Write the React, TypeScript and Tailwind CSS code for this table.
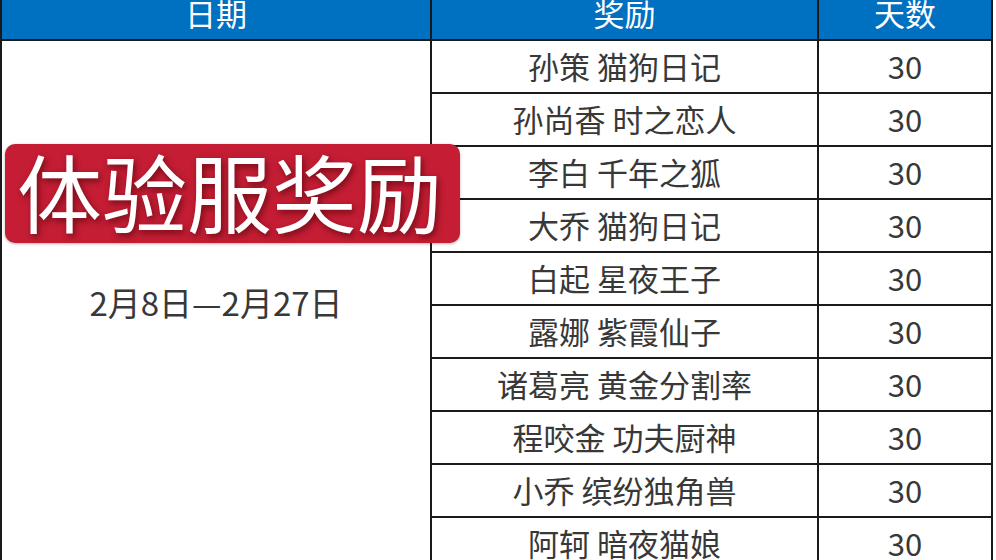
import React from "react";

const rows = [
  "孙策 猫狗日记",
  "孙尚香 时之恋人",
  "李白 千年之狐",
  "大乔 猫狗日记",
  "白起 星夜王子",
  "露娜 紫霞仙子",
  "诸葛亮 黄金分割率",
  "程咬金 功夫厨神",
  "小乔 缤纷独角兽",
  "阿轲 暗夜猫娘",
];

const font = { fontFamily: '"Noto Sans CJK SC", "Noto Sans", sans-serif' };

export default function App() {
  return (
    <div
      className="relative w-[996px] h-[560px] overflow-hidden bg-white"
      style={font}
    >
      <div className="w-[993px] border-l-2 border-r-2 border-[#1a1a1a]">
        {/* header */}
        <div className="flex h-[41px] bg-[#0070c0] border-b-2 border-[#1a1a1a] text-white text-[31px]">
          <div className="w-[430px] border-r-2 border-[#1a1a1a] flex justify-center">
            <span className="block leading-[30px] -mt-[2px]">日期</span>
          </div>
          <div className="w-[387px] border-r-2 border-[#1a1a1a] flex justify-center">
            <span className="block leading-[30px] -mt-[2px]">奖励</span>
          </div>
          <div className="flex-1 flex justify-center">
            <span className="block leading-[30px] -mt-[2px]">天数</span>
          </div>
        </div>
        {/* body */}
        <div className="flex">
          <div className="w-[430px] h-[530px] border-r-2 border-[#1a1a1a] flex items-center justify-center pb-[8px]">
            <span className="text-[33px] text-[#383838] leading-none">
              2月8日—2月27日
            </span>
          </div>
          <div className="flex flex-col">
            {rows.map((r) => (
              <div key={r} className="flex h-[53px] border-b-2 border-[#1a1a1a]">
                <div className="w-[387px] border-r-2 border-[#1a1a1a] flex items-center justify-center text-[31px] text-[#383838] leading-none pb-[2px]">
                  {r}
                </div>
                <div className="w-[172px] flex items-center justify-center text-[31px] text-[#383838] leading-none pb-[2px]">
                  30
                </div>
              </div>
            ))}
          </div>
        </div>
      </div>

      {/* badge overlay */}
      <div className="absolute left-[5px] top-[144px] w-[455px] h-[99px] rounded-[10px] bg-[#c41d34] shadow-[0_1px_3px_rgba(0,0,0,0.3)] flex items-center pl-[12px] pb-[9px]">
        <span className="text-white text-[85px] leading-none [text-shadow:2px_3px_6px_rgba(60,0,0,0.6)]">
          体验服奖励
        </span>
      </div>
    </div>
  );
}
